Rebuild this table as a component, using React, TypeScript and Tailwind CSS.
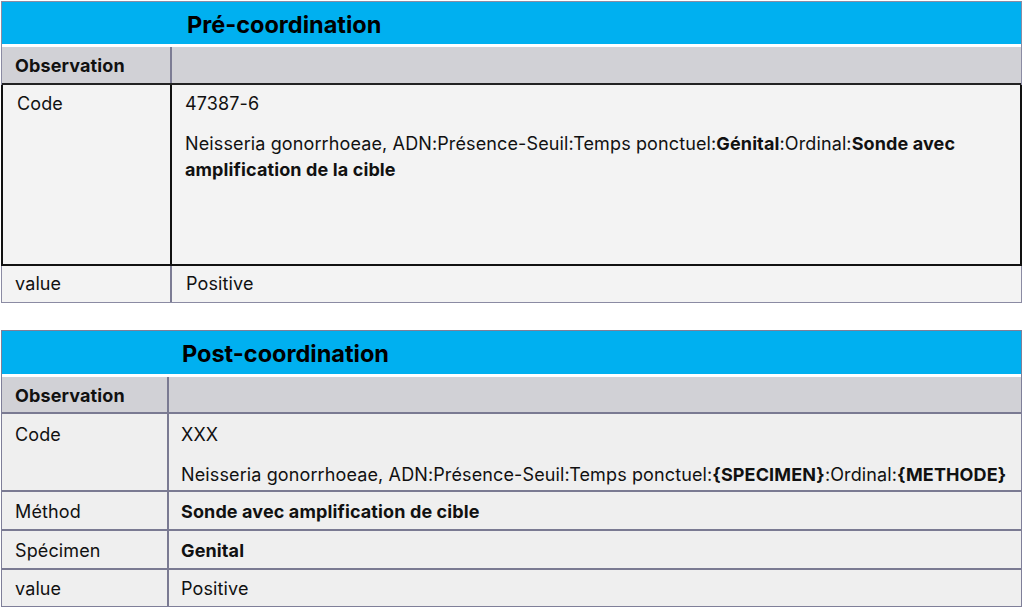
import React from "react";

const font = { fontFamily: 'Inter, "Noto Sans", "Liberation Sans", sans-serif' };

export default function App() {
  return (
    <div className="w-[1024px] h-[612px] bg-white text-[#111] text-[18px] leading-[26px] tracking-[0.12px]" style={font}>
      <div className="pt-[1px] pl-[1px]">
        {/* Table 1 */}
        <div className="w-[1021px] border border-[#8b8ba3] bg-[#f3f3f3]">
          <div className="h-[42px] bg-[#00b0f0] flex items-center pl-[185px] pt-[3px]">
            <span className="text-[23.5px] font-bold text-black tracking-normal">Pré-coordination</span>
          </div>
          <div className="h-[3px] bg-white" />
          <div className="flex h-[38px] bg-[#d1d1d6] border-b-2 border-[#222]">
            <div className="w-[170px] shrink-0 pl-[13px] pt-[6px] border-r-2 border-[#7c7c94] font-bold">Observation</div>
            <div className="flex-1" />
          </div>
          <div className="flex h-[181px] border-2 border-t-0 border-[#111] -mx-[1px]">
            <div className="w-[169px] shrink-0 pl-[14px] pt-[6px] border-r-2 border-[#111]">Code</div>
            <div className="flex-1 pl-[13px] pt-[6px]">
              <div>47387-6</div>
              <div className="mt-[14px] pr-[40px]">
                Neisseria gonorrhoeae, ADN:Présence-Seuil:Temps ponctuel:<b>Génital</b>:Ordinal:<b>Sonde avec amplification de la cible</b>
              </div>
            </div>
          </div>
          <div className="flex h-[36px]">
            <div className="w-[170px] shrink-0 pl-[13px] pt-[5px] border-r-2 border-[#7c7c94]">value</div>
            <div className="flex-1 pl-[14px] pt-[5px]">Positive</div>
          </div>
        </div>

        <div className="h-[27px]" />

        {/* Table 2 */}
        <div className="w-[1021px] border border-[#7f7f99] bg-[#efefef]">
          <div className="h-[43px] bg-[#00b0f0] flex items-center pl-[180px] pt-[3px]">
            <span className="text-[23.5px] font-bold text-black tracking-normal">Post-coordination</span>
          </div>
          <div className="h-[3px] bg-white" />
          <div className="flex h-[37px] bg-[#d1d1d6] border-b-2 border-[#7a7a92]">
            <div className="w-[167px] shrink-0 pl-[13px] pt-[6px] border-r-2 border-[#7a7a92] font-bold">Observation</div>
            <div className="flex-1" />
          </div>
          <div className="flex h-[78px] border-b-2 border-[#7a7a92]">
            <div className="w-[167px] shrink-0 pl-[13px] pt-[8px] border-r-2 border-[#7a7a92]">Code</div>
            <div className="flex-1 pl-[12px] pt-[8px]">
              <div>XXX</div>
              <div className="mt-[14px] whitespace-nowrap">
                Neisseria gonorrhoeae, ADN:Présence-Seuil:Temps ponctuel:<b>{"{SPECIMEN}"}</b>:Ordinal:<b>{"{METHODE}"}</b>
              </div>
            </div>
          </div>
          <div className="flex h-[39px] border-b-2 border-[#7a7a92]">
            <div className="w-[167px] shrink-0 pl-[13px] pt-[7px] border-r-2 border-[#7a7a92]">Méthod</div>
            <div className="flex-1 pl-[12px] pt-[7px] font-bold">Sonde avec amplification de cible</div>
          </div>
          <div className="flex h-[39px] border-b-2 border-[#7a7a92]">
            <div className="w-[167px] shrink-0 pl-[13px] pt-[7px] border-r-2 border-[#7a7a92]">Spécimen</div>
            <div className="flex-1 pl-[12px] pt-[7px] font-bold">Genital</div>
          </div>
          <div className="flex h-[36px]">
            <div className="w-[167px] shrink-0 pl-[13px] pt-[6px] border-r-2 border-[#7a7a92]">value</div>
            <div className="flex-1 pl-[12px] pt-[6px]">Positive</div>
          </div>
        </div>
      </div>
    </div>
  );
}
